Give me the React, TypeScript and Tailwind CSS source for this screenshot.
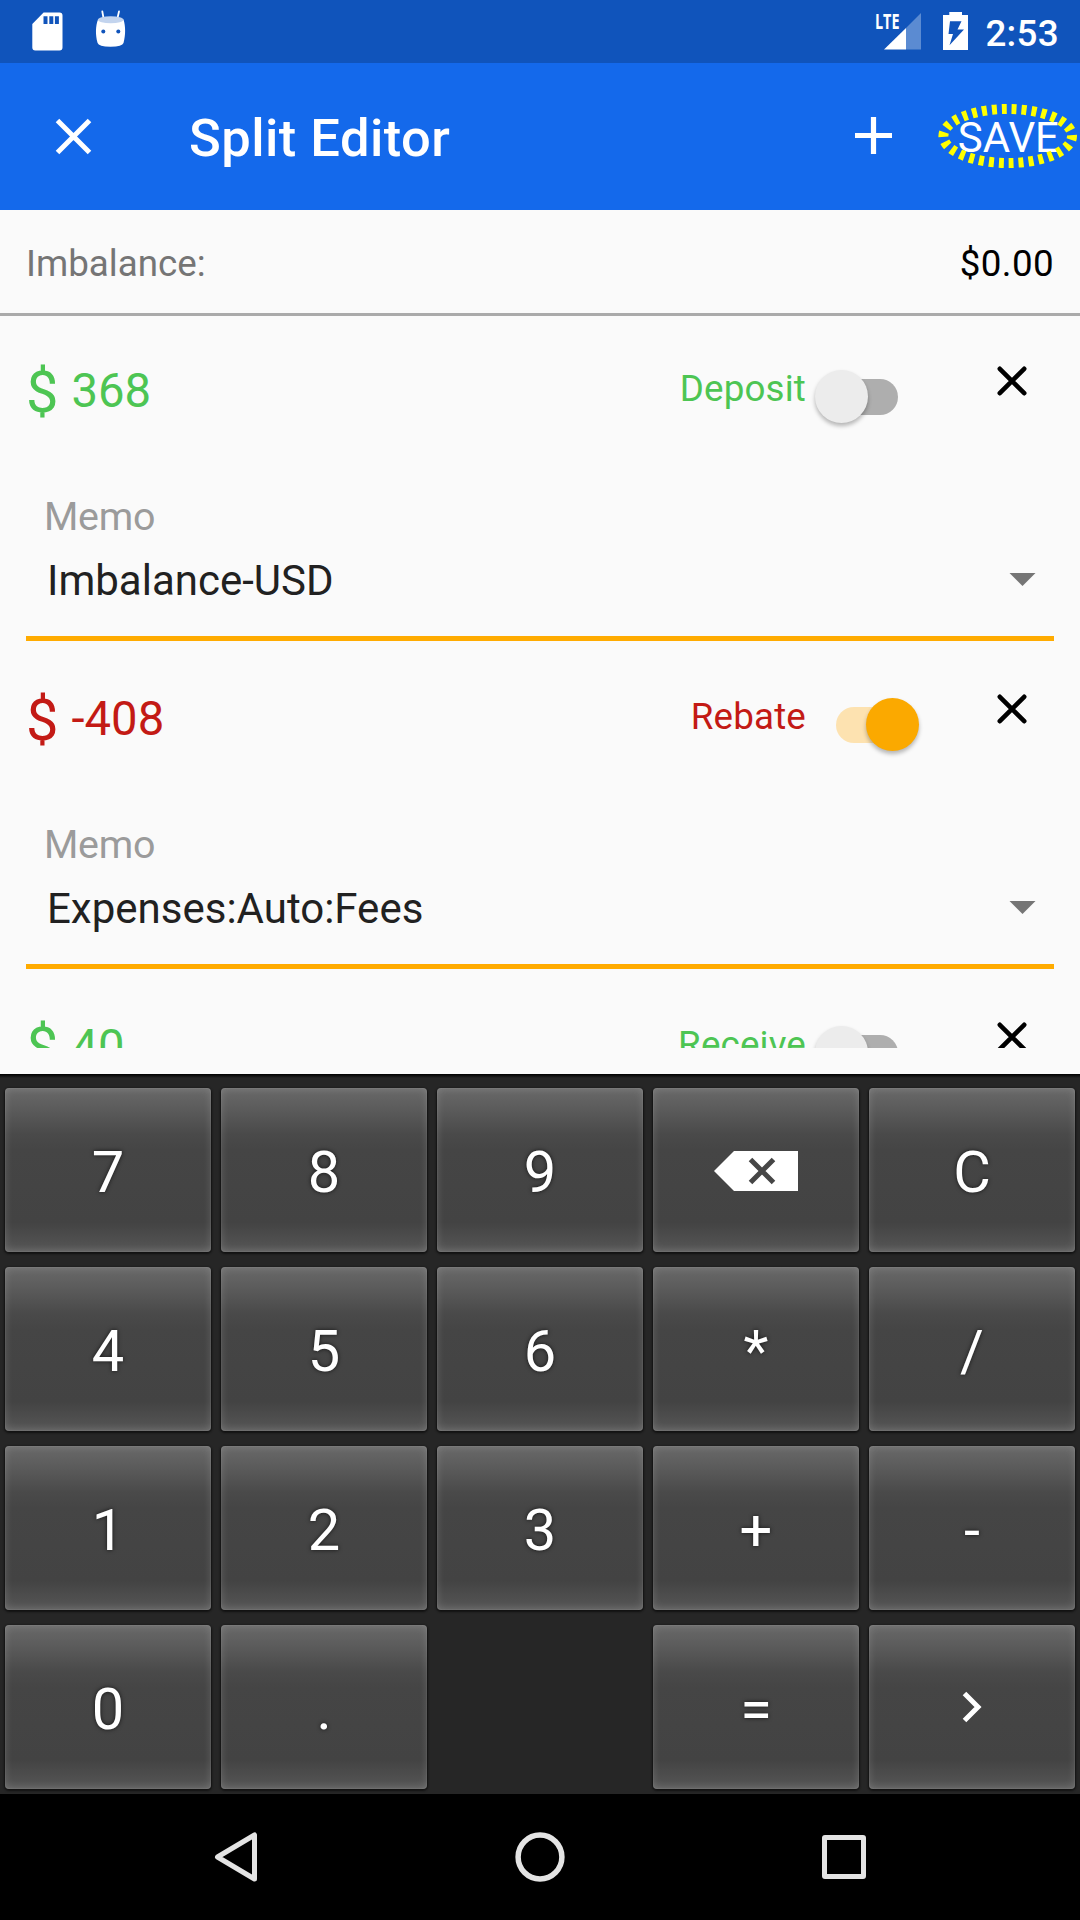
import type { ReactNode } from "react";

type Split = { amount: string; label: string; on: boolean; account?: string };

const splits: Split[] = [
  { amount: "368", label: "Deposit", on: false, account: "Imbalance-USD" },
  { amount: "-408", label: "Rebate", on: true, account: "Expenses:Auto:Fees" },
  { amount: "40", label: "Receive", on: false },
];

function SdCardIcon() {
  return (
    <svg className="block h-[39px] w-[31px]" viewBox="0 0 31 39" fill="#fff">
      <path
        fillRule="evenodd"
        d="M11.6 .5H27.5a3 3 0 0 1 3 3V35.500a3 3 0 0 1-3 3H3.300a3 3 0 0 1-3-3V12zM11.500 4.300V12h4V4.300zM17.300 4.300V12h4V4.300zM22.900 4.300V12h4V4.300z"
      />
    </svg>
  );
}

function DroidIcon() {
  return (
    <svg className="block h-[38px] w-[32px]" viewBox="0 0 32 38">
      <path d="M7.300 1.500L8.500 8M24 1.500L22.500 8" stroke="#fff" strokeWidth="1.800" strokeLinecap="round" />
      <path d="M3 9.500C.5 16 .3 25 2.600 33Q3.500 36.700 15.500 36.700T28.500 33C30.800 25 30.600 16 28.500 9.500Q16 15 3 9.500z" fill="#fff" />
      <ellipse cx="15.700" cy="9.700" rx="12.800" ry="3.500" fill="#c3d4ee" />
      <circle cx="8.300" cy="21.500" r="2" fill="#1054bb" />
      <circle cx="23.300" cy="21.500" r="2" fill="#1054bb" />
    </svg>
  );
}

function SignalIcon() {
  return (
    <svg className="block h-[38px] w-[47px] overflow-visible" viewBox="0 0 47 38">
      <path d="M46 1V37.500H31V16z" fill="#5b8bd2" />
      <path d="M9 37.500H31V16z" fill="#fff" />
      <text
        x="0"
        y="17"
        textLength="24.500"
        lengthAdjust="spacingAndGlyphs"
        className="font-['Open_Sans'] text-[22px] font-bold"
        fill="#fff"
      >
        LTE
      </text>
    </svg>
  );
}

function BatteryIcon() {
  return (
    <svg className="block h-[38px] w-[25px]" viewBox="0 0 25 38">
      <path d="M6.300 0H19V3H25V38H0V3H6.300z" fill="#fff" />
      <path d="M7 9.300H18.500L14.500 17.500H21L6.500 33.300L10 22H5.500z" fill="#1054bb" />
    </svg>
  );
}

function StatusBar() {
  return (
    <div className="flex h-[63px] items-start bg-[#1054bb] pl-8 pt-3">
      <SdCardIcon />
      <div className="ml-8 -mt-[2px]">
        <DroidIcon />
      </div>
      <div className="ml-auto">
        <SignalIcon />
      </div>
      <div className="ml-[21px]">
        <BatteryIcon />
      </div>
      <span className="ml-[17px] mr-[21px] text-[36.750px] leading-[44px] font-medium tracking-[0.3px] text-white">2:53</span>
    </div>
  );
}

function Toolbar() {
  return (
    <div className="flex h-[147px] items-center bg-[#1469eb] text-white">
      <svg className="ml-[53px] block size-[41px]" viewBox="0 0 41 41">
        <path d="M4.500 4.500L36.500 36.500M36.500 4.500L4.500 36.500" stroke="#fff" strokeWidth="5" />
      </svg>
      <h1 className="ml-[95px] mt-[3px] text-[52.500px] leading-[62px] font-medium tracking-[0.45px]">Split Editor</h1>
      <svg className="ml-auto mb-[2px] block size-[37px]" viewBox="0 0 37 37">
        <path d="M18.500 0V37M0 18.500H37" stroke="#fff" strokeWidth="5.200" />
      </svg>
      <div className="relative ml-[66px] mr-[21px]">
        <span className="relative top-px block text-[42px] leading-[50px]">SAVE</span>
        <svg className="absolute -left-[20px] -top-[9px] block h-[66px] w-[140px]" viewBox="0 0 140 66">
          <ellipse
            cx="69.700"
            cy="33"
            rx="64.300"
            ry="27"
            fill="none"
            stroke="#ff0"
            strokeWidth="10"
            pathLength="300"
            strokeDasharray="5 5"
            strokeDashoffset="1"
          />
        </svg>
      </div>
    </div>
  );
}

function Toggle({ on }: { on: boolean }) {
  return (
    <div className="mt-[54px] flex h-[54px] w-[104px] shrink-0 items-center">
      <div className={`relative ml-[21px] h-9 w-[62px] rounded-full ${on ? "bg-[#fde2b0]" : "bg-[#aeaeae]"}`}>
        <div
          className={`absolute -top-[9px] size-[53px] rounded-full shadow-[0_3px_4px_rgba(0,0,0,0.28)] ${
            on ? "left-[30px] bg-[#fba900]" : "-left-[21px] bg-[#ececec]"
          }`}
        />
      </div>
    </div>
  );
}

function SplitItem({ split }: { split: Split }) {
  const tone = split.on ? "text-[#c31a15]" : "text-[#4dc553]";
  return (
    <div className="mb-[3px] shrink-0 px-[26px]">
      <div className={`flex h-[170px] items-start ${tone}`}>
        <span className="mt-[42px] text-[57.750px] leading-[68px]">$</span>
        <span className="mt-[47px] ml-[13px] text-[47.250px] leading-[56px]">{split.amount}</span>
        <span className="mt-[51px] ml-auto mr-[9px] text-[36.750px] leading-[44px] tracking-[0.15px]">{split.label}</span>
        <Toggle on={split.on} />
        <svg className="mt-[45px] ml-[73px] mr-[22px] block size-10 text-black" viewBox="0 0 40 40">
          <path d="M7.800 7.800L32.200 32.200M32.200 7.800L7.800 32.200" stroke="currentColor" strokeWidth="4.600" strokeLinecap="round" />
        </svg>
      </div>
      {split.account && (
        <>
          <div className="flex h-[60px] items-center pt-[2px] pl-[18px] text-[39.375px] tracking-[-0.25px] text-[#9b9b9b]">Memo</div>
          <div className="flex h-[68px] items-center justify-between pl-[21px] pr-[18px] text-[42px] text-[#212121]">
            <span>{split.account}</span>
            <svg className="mb-px block h-[13px] w-[27px]" viewBox="0 0 27 13">
              <path d="M.5 0H26.500L13.500 13z" fill="#757575" />
            </svg>
          </div>
          <div className="mt-[22px] h-[5px] bg-[#ffab00]" />
        </>
      )}
    </div>
  );
}

function Backspace() {
  return (
    <svg className="mt-[2px] block h-10 w-[84px]" viewBox="0 0 84 40">
      <path d="M0 20L20 0H84V40H20z" fill="#fff" />
      <path d="M36.500 8.500L59.500 31.500M59.500 8.500L36.500 31.500" stroke="#464646" strokeWidth="5" />
    </svg>
  );
}

function Next() {
  return (
    <svg className="block h-8 w-5" viewBox="0 0 20 32">
      <path d="M2.500 2.500L16 16L2.500 29.500" fill="none" stroke="#fff" strokeWidth="5" />
    </svg>
  );
}

function Key({ children }: { children: ReactNode }) {
  return (
    <button className="flex h-[164px] w-[206px] items-center justify-center rounded-[4px] bg-[linear-gradient(#696969_0%,#5a5a5a_14%,#4a4a4a_28%,#454545_38%,#434343_82%,#515151_95%,#5c5c5c_100%)] text-[57.750px] leading-[68px] text-white shadow-[0_1px_2px_1px_#111,inset_0_0_8px_rgba(255,255,255,0.17),inset_0_0_1px_1px_rgba(255,255,255,0.05)] [text-shadow:0_0_4px_rgba(0,0,0,0.7)]">
      {children}
    </button>
  );
}

const keys = ["7", "8", "9", "back", "C", "4", "5", "6", "*", "/", "1", "2", "3", "+", "-", "0", ".", "", "=", "next"];

function Keypad() {
  return (
    <div className="h-[720px] bg-[#262626] bg-[linear-gradient(#000_0px,#262626_4px)] pt-[14px] pl-[5px]">
      <div className="grid grid-cols-[repeat(5,206px)] gap-x-[10px] gap-y-[15px]">
        {keys.map((k, i) => {
          if (k === "") return <div key={i} />;
          return (
            <Key key={i}>
              {k === "back" ? <Backspace /> : k === "next" ? <Next /> : <span className="mt-[4px]">{k}</span>}
            </Key>
          );
        })}
      </div>
    </div>
  );
}

function NavBar() {
  return (
    <div className="flex h-[126px] items-center bg-black">
      <svg className="ml-[214px] block h-[52px] w-[44px]" viewBox="0 0 44 52" fill="none" stroke="#e4e4e4" strokeWidth="5" strokeLinejoin="round">
        <path d="M40.500 4V48L3.500 26z" />
      </svg>
      <svg className="ml-[256px] block size-[52px]" viewBox="0 0 52 52" fill="none" stroke="#e4e4e4" strokeWidth="5.500">
        <circle cx="26" cy="26" r="21.900" />
      </svg>
      <div className="ml-[256px] h-[44px] w-[44px] rounded-[3px] border-[5px] border-[#e4e4e4]" />
    </div>
  );
}

export default function App() {
  return (
    <div className="flex h-[1920px] w-[1080px] flex-col overflow-hidden bg-[#fafafa] font-[Roboto,sans-serif]">
      <StatusBar />
      <Toolbar />
      <div className="flex h-[106px] items-start justify-between border-b-[3px] border-[#aaa] px-[26px] pt-[32px] text-[36.750px] leading-[44px]">
        <span className="text-[#757575]">Imbalance:</span>
        <span className="tracking-[0.4px] text-black">$0.00</span>
      </div>
      <div className="mb-[26px] flex h-[732px] flex-col overflow-hidden">
        {splits.map((s) => (
          <SplitItem key={s.label} split={s} />
        ))}
      </div>
      <Keypad />
      <NavBar />
    </div>
  );
}
